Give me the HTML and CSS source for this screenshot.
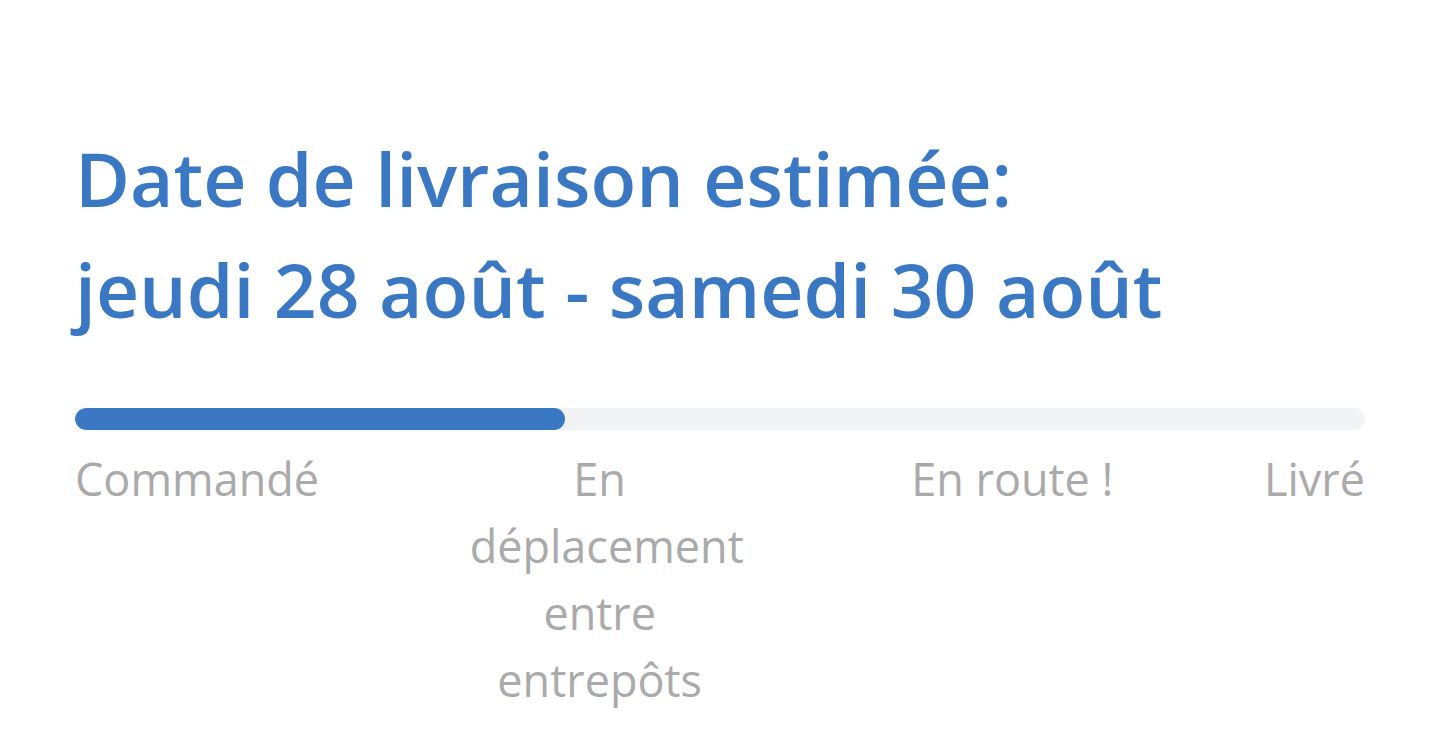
FILE: index.html
```html
<!DOCTYPE html>
<html lang="fr">
<head>
    <meta charset="UTF-8">
    <meta name="viewport" content="width=device-width, initial-scale=1.0">
    <title>Suivi de livraison</title>
    <link rel="stylesheet" href="styles.css">
</head>
<body>
<div class="tracking">
    <h2 class="eta">Date de livraison estimée:<br>jeudi 28 août - samedi 30 août</h2>

    <div class="progress">
        <div class="progress-fill" style="width: 38%;"></div>
    </div>

    <div class="steps">
        <span class="step first">Commandé</span>
        <span class="step second">En déplacement entre entrepôts</span>
        <span class="step third">En route !</span>
        <span class="step last">Livré</span>
    </div>
</div>
</body>
</html>
```

FILE: styles.css
```css
body {
    margin: 0;
    padding: 0;
    background-color: #fff;
    font-family: "Open Sans", "Noto Sans", Arial, sans-serif;
}
.tracking {
    padding: 123px 75px 0 75px;
}
.eta {
    margin: 0;
    font-size: 75px;
    line-height: 111px;
    font-weight: 600;
    color: #3a78c3;
}
.progress {
    margin-top: 63px;
    height: 22px;
    border-radius: 11px;
    background-color: #f2f3f5;
    overflow: hidden;
}
.progress-fill {
    height: 100%;
    border-radius: 11px;
    background-color: #3a78c3;
}
.steps {
    display: flex;
    justify-content: space-between;
    align-items: flex-start;
    margin-top: 15px;
    font-size: 45px;
    line-height: 67px;
    color: #aaaaaa;
}
.step {
    flex-shrink: 0;
}
.step.second {
    width: 260px;
    padding-right: 31px;
    text-align: center;
}
.step.last {
    text-align: right;
}
```
